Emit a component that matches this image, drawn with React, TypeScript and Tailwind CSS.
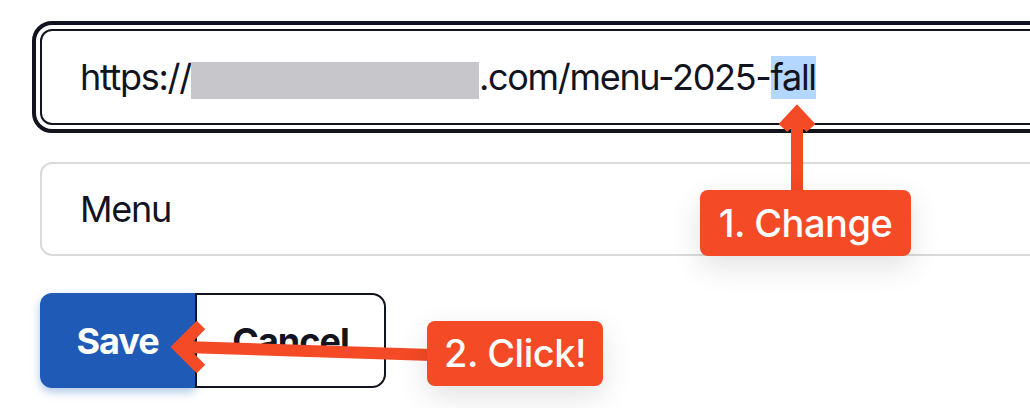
import React from "react";

const ORANGE = "#f44a26";

function Arrows() {
  return (
    <svg
      className="pointer-events-none absolute left-0 top-0"
      width={1030}
      height={408}
      viewBox="0 0 1030 408"
    >
      {/* 1. change: points up at "fall" */}
      <line x1={797} y1={116} x2={797} y2={194} stroke={ORANGE} strokeWidth={12} />
      <polyline
        points="783,128 797,113 811,128"
        fill="none"
        stroke={ORANGE}
        strokeWidth={12}
        strokeLinejoin="miter"
      />
      {/* 2. click: points left at Save */}
      <line x1={184} y1={347} x2={432} y2={355} stroke={ORANGE} strokeWidth={12} />
      <polyline
        points="201,325 179,347 201,369"
        fill="none"
        stroke={ORANGE}
        strokeWidth={12}
        strokeLinejoin="miter"
      />
    </svg>
  );
}

function Callout({ text, className }: { text: string; className: string }) {
  return (
    <div
      className={`absolute flex items-center justify-center rounded-[8px] bg-[#f44a26] text-[38px] font-medium tracking-[-0.5px] text-white shadow-[0_10px_30px_rgba(0,0,0,0.12)] ${className}`}
    >
      {text}
    </div>
  );
}

export default function App() {
  return (
    <div
      className="relative h-[408px] w-[1030px] overflow-hidden bg-white text-[#11131f]"
      style={{ fontFamily: "Inter, 'Noto Sans', sans-serif" }}
    >
      <div className="flex flex-col gap-[37px] pl-[40px] pt-[29px] tracking-[-1.3px]">
        <div className="flex h-[96px] w-[1100px] items-center rounded-[12px] border-2 border-[#11131f] pl-[38px] text-[36px] outline-4 outline-offset-4 outline-solid outline-[#11131f]">
          <span>https://</span>
          <span className="inline-block h-[37px] w-[288px] translate-y-[3px] bg-[#c7c7cb]" />
          <span>.com/menu-2025-</span>
          <span className="inline-block h-[43px] bg-[#b3d7fe] leading-[43px]">fall</span>
        </div>

        <div className="flex h-[94px] w-[1100px] items-center rounded-[12px] border-2 border-[#dadada] pl-[38px] text-[36px]">
          Menu
        </div>

        <div className="flex h-[95px] text-[36px] font-bold tracking-[-1px]">
          <button className="h-full w-[155px] rounded-l-[12px] bg-[#1f5bb6] text-white shadow-[0_4px_10px_rgba(31,91,182,0.35)]">
            Save
          </button>
          <button className="h-full w-[191px] rounded-r-[14px] border-2 border-[#11131f] bg-white">
            Cancel
          </button>
        </div>
      </div>

      <Arrows />

      <Callout text="1. Change" className="left-[700px] top-[190px] h-[66px] w-[211px]" />
      <Callout text="2. Click!" className="left-[427px] top-[321px] h-[65px] w-[176px]" />
    </div>
  );
}
